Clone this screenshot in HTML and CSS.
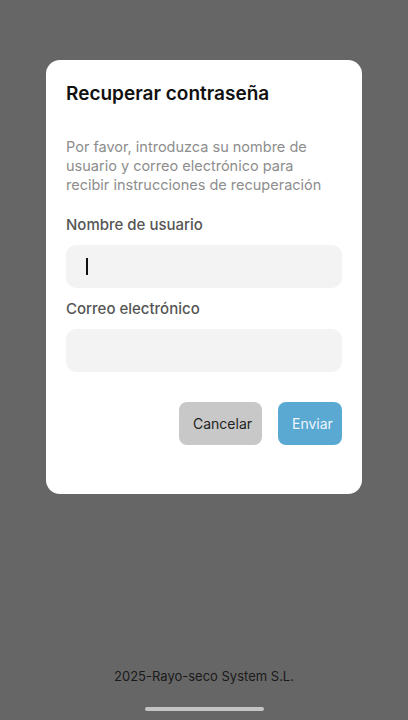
FILE: index.html
```html
<!DOCTYPE html>
<html>
<head>
    <meta charset="utf-8">
    <title>Recuperar contraseña</title>
    <link rel="stylesheet" href="styles.css">
</head>
<body>
    <div class="screen">
        <div class="dialog">
            <h2 class="dialog-title">Recuperar contraseña</h2>
            <p class="dialog-text">Por favor, introduzca su nombre de usuario y correo electrónico para recibir instrucciones de recuperación</p>

            <label class="field-label" for="username">Nombre de usuario</label>
            <div class="field">
                <span class="caret"></span>
                <input type="text" id="username" name="username">
            </div>

            <label class="field-label" for="email">Correo electrónico</label>
            <div class="field">
                <input type="email" id="email" name="email">
            </div>

            <div class="actions">
                <button type="button" class="btn btn-cancel">Cancelar</button>
                <button type="button" class="btn btn-send">Enviar</button>
            </div>
        </div>

        <div class="footer">2025-Rayo-seco System S.L.</div>
        <div class="home-bar"></div>
    </div>
</body>
</html>
```

FILE: styles.css
```css
* {
    box-sizing: border-box;
}

body {
    margin: 0;
    font-family: Inter, "Open Sans", sans-serif;
    background-color: #666666;
}

.screen {
    height: 720px;
    display: flex;
    flex-direction: column;
    align-items: center;
    padding-top: 60px;
}

.dialog {
    width: 316px;
    height: 434px;
    background-color: #fff;
    border-radius: 14px;
    padding: 22px 20px 0 20px;
    display: flex;
    flex-direction: column;
}

.dialog-title {
    margin: 0;
    font-size: 19px;
    font-weight: 600;
    color: #111;
    line-height: 24px;
}

.dialog-text {
    margin: 31px 0 0 0;
    max-width: 268px;
    font-size: 14.5px;
    line-height: 19px;
    color: #8d8d8d;
}

.field-label {
    display: block;
    margin-top: 21px;
    font-size: 15px;
    font-weight: 500;
    line-height: 20px;
    color: #555;
}

.field + .field-label {
    margin-top: 11px;
}

.field {
    position: relative;
    margin-top: 10px;
    height: 43px;
    background-color: #f3f3f3;
    border-radius: 10px;
}

.field input {
    width: 100%;
    height: 100%;
    border: none;
    background: transparent;
    outline: none;
    padding: 0 20px;
    font-family: inherit;
    font-size: 15px;
}

.caret {
    position: absolute;
    left: 20px;
    top: 13px;
    width: 2px;
    height: 17px;
    background-color: #111;
}

.actions {
    display: flex;
    justify-content: flex-end;
    gap: 16px;
    margin-top: 30px;
}

.btn {
    height: 43px;
    border: none;
    border-radius: 8px;
    font-family: inherit;
    font-size: 14px;
    padding: 0 14px;
    cursor: pointer;
}

.btn-cancel {
    width: 83px;
    background-color: #c8c8c8;
    color: #222;
}

.btn-send {
    width: 64px;
    background-color: #5aa9d3;
    color: #eef6fb;
}

.footer {
    margin-top: auto;
    font-size: 13px;
    color: #1a1a1a;
    margin-bottom: 23px;
}

.home-bar {
    width: 119px;
    height: 4px;
    border-radius: 2px;
    background-color: #c4c4c4;
    margin-bottom: 9px;
}
```
